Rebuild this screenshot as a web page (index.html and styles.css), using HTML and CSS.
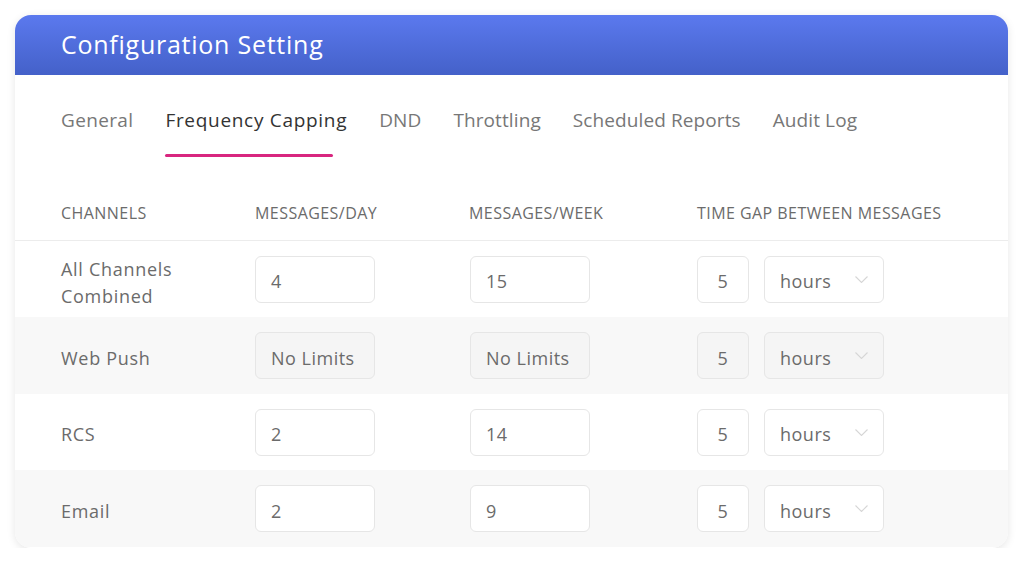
FILE: index.html
```html
<!DOCTYPE html>
<html>
<head>
<meta charset="utf-8">
<link rel="stylesheet" href="styles.css">
</head>
<body>
<div class="card">
  <div class="header">Configuration Setting</div>
  <nav class="tabs">
    <span class="tab first">General</span>
    <span class="tab active">Frequency Capping</span>
    <span class="tab">DND</span>
    <span class="tab">Throttling</span>
    <span class="tab">Scheduled Reports</span>
    <span class="tab">Audit Log</span>
  </nav>
  <div class="table">
    <div class="row head">
      <div class="c1">CHANNELS</div>
      <div class="c2">MESSAGES/DAY</div>
      <div class="c3">MESSAGES/WEEK</div>
      <div class="c4">TIME GAP BETWEEN MESSAGES</div>
    </div>
    <div class="row">
      <div class="c1 name two">All Channels<br>Combined</div>
      <div class="c2"><div class="box">4</div></div>
      <div class="c3"><div class="box">15</div></div>
      <div class="c4 gap"><div class="box num">5</div><div class="box sel">hours<svg class="chev" viewBox="0 0 13 7"><path d="M0.5 0.5l6 6 6-6"/></svg></div></div>
    </div>
    <div class="row alt dis">
      <div class="c1 name">Web Push</div>
      <div class="c2"><div class="box">No Limits</div></div>
      <div class="c3"><div class="box">No Limits</div></div>
      <div class="c4 gap"><div class="box num">5</div><div class="box sel">hours<svg class="chev" viewBox="0 0 13 7"><path d="M0.5 0.5l6 6 6-6"/></svg></div></div>
    </div>
    <div class="row">
      <div class="c1 name">RCS</div>
      <div class="c2"><div class="box">2</div></div>
      <div class="c3"><div class="box">14</div></div>
      <div class="c4 gap"><div class="box num">5</div><div class="box sel">hours<svg class="chev" viewBox="0 0 13 7"><path d="M0.5 0.5l6 6 6-6"/></svg></div></div>
    </div>
    <div class="row alt">
      <div class="c1 name">Email</div>
      <div class="c2"><div class="box">2</div></div>
      <div class="c3"><div class="box">9</div></div>
      <div class="c4 gap"><div class="box num">5</div><div class="box sel">hours<svg class="chev" viewBox="0 0 13 7"><path d="M0.5 0.5l6 6 6-6"/></svg></div></div>
    </div>
  </div>
</div>
</body>
</html>
```

FILE: styles.css
```css
* { box-sizing: border-box; }
html, body { margin: 0; padding: 0; background: #fff; }
body {
  font-family: "Open Sans", "DejaVu Sans", sans-serif;
  color: #6b6b6b;
  padding: 15px 16px 0 15px;
}
.card {
  width: 993px;
  height: 533px;
  border-radius: 16px;
  background: #fff;
  box-shadow: 0 2px 8px rgba(0,0,0,0.10);
  overflow: hidden;
}
.header {
  height: 60px;
  background: linear-gradient(180deg, #5b79ee 0%, #4461c9 100%);
  color: #fff;
  font-size: 25px;
  font-weight: 500;
  letter-spacing: 0.75px;
  padding-left: 46px;
  padding-bottom: 2px;
  display: flex;
  align-items: center;
}
.tabs {
  display: flex;
  gap: 32px;
  padding: 32px 0 0 46px;
  height: 114px;
}
.tab {
  font-size: 19px;
  letter-spacing: 0.1px;
  color: #777;
  height: 50px;
  line-height: 26px;
  position: relative;
}
.tab.first { letter-spacing: 0.35px; }
.tab.active {
  color: #333;
  font-weight: 500;
  letter-spacing: 0.7px;
}
.tab.active::after {
  content: "";
  position: absolute;
  left: 0;
  top: 47px;
  width: 168px;
  height: 3px;
  background: #d8267f;
  border-radius: 2px;
}
.row {
  display: flex;
  align-items: center;
  height: 76px;
}
.row.head {
  height: 52px;
  border-bottom: 1px solid #ececec;
  font-size: 16px;
  letter-spacing: 0.45px;
  color: #6b6b6b;
  align-items: flex-start;
  padding-top: 13px;
}
.row.alt { background: #f8f8f8; height: 77px; }
.c1 { width: 240px; padding-left: 46px; }
.c2 { width: 214px; }
.c3 { width: 228px; }
.c4 { flex: 1; }
.c3 .box { margin-left: 1px; }
.name {
  font-size: 18px;
  letter-spacing: 0.7px;
  line-height: 27px;
  color: #6b6b6b;
  padding-top: 5px;
}
.name.two { padding-top: 8px; }
.gap { display: flex; gap: 15px; }
.box {
  width: 120px;
  height: 47px;
  border: 1px solid #e6e6e6;
  border-radius: 6px;
  background: #fff;
  font-size: 18px;
  letter-spacing: 0.5px;
  color: #6b6b6b;
  display: flex;
  align-items: center;
  padding-left: 15px;
  padding-top: 4px;
}
.box.num { width: 52px; padding-left: 0; justify-content: center; }
.box.sel { width: 120px; position: relative; }
.chev {
  position: absolute;
  right: 15px;
  top: 19px;
  width: 13px;
  height: 7px;
  fill: none;
  stroke: #d6d6d6;
  stroke-width: 1.1;
}
.dis .box { background: #f5f5f5; }
```
